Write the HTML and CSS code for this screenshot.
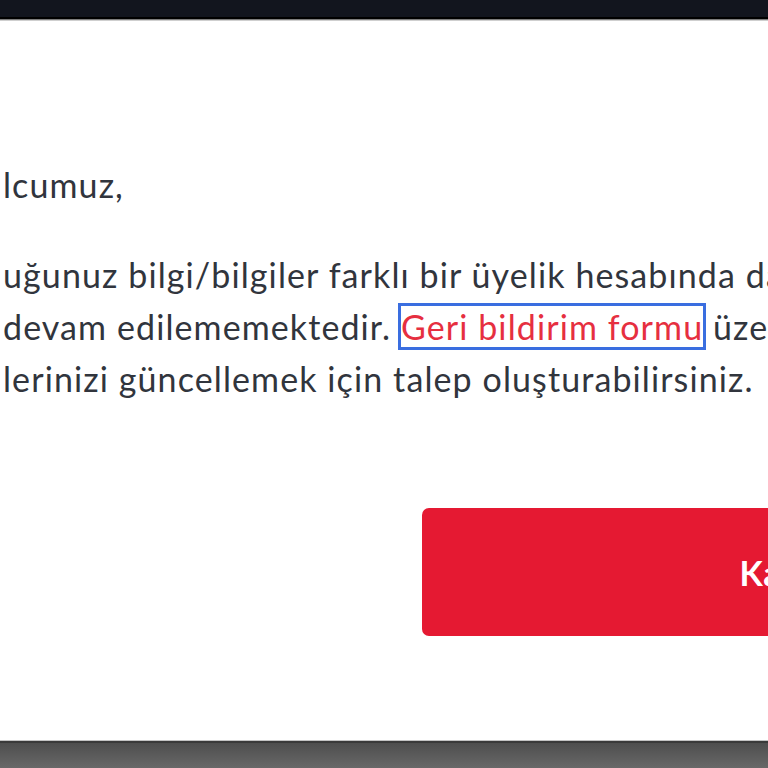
FILE: index.html
```html
<!DOCTYPE html>
<html lang="tr">
<head>
<meta charset="utf-8">
<title>Bilgilendirme</title>
<link rel="stylesheet" href="styles.css">
</head>
<body>
<div class="screen">
  <div class="topbar"></div>
  <main class="modal">
    <div class="modal-body">
      <p class="greeting">lcumuz,</p>
      <p class="message">uğunuz bilgi/bilgiler farklı bir üyelik hesabında da<br>devam edilememektedir. <a class="feedback-link" href="#">Geri bildirim formu</a> üzerinden<br>lerinizi güncellemek için talep oluşturabilirsiniz.</p>
    </div>
    <div class="modal-actions">
      <button class="btn-primary" type="button">Kapat</button>
    </div>
  </main>
  <div class="bottombar"></div>
</div>
</body>
</html>
```
FILE: styles.css
```css
html, body {
  margin: 0;
  padding: 0;
  height: 100%;
}
body {
  font-family: Lato, "Open Sans", sans-serif;
  background: #ffffff;
  overflow: hidden;
}
.screen {
  height: 768px;
  display: flex;
  flex-direction: column;
}
.topbar {
  height: 21px;
  flex-shrink: 0;
  background: linear-gradient(to bottom, #12151e 0, #12151e 17px, #000000 17px, #000000 19px, #7d7d7d 19px, #7d7d7d 20px, #cfcfcf 20px, #cfcfcf 21px);
}
.modal {
  flex: 1;
  background: #ffffff;
  overflow: hidden;
  display: flex;
  flex-direction: column;
}
.modal-body {
  padding: 138px 0 0 3px;
}
.greeting,
.message {
  margin: 0;
  font-size: 34px;
  line-height: 52px;
  color: #31353d;
  white-space: nowrap;
  letter-spacing: 1.1px;
}
.greeting {
  margin-bottom: 38px;
}
.feedback-link {
  color: #e62f40;
  text-decoration: none;
  outline: 3px solid #3a6ee0;
  outline-offset: 0;
}
.modal-actions {
  display: flex;
  padding-left: 422px;
  margin-top: 103px;
}
.btn-primary {
  flex-shrink: 0;
  width: 727px;
  height: 128px;
  border: none;
  border-radius: 7px;
  background: #e51932;
  color: #ffffff;
  font-family: Lato, "Open Sans", sans-serif;
  font-weight: 700;
  font-size: 34px;
  letter-spacing: 0.5px;
}
.bottombar {
  height: 28px;
  flex-shrink: 0;
  background: linear-gradient(to bottom, #c4c4c4 0, #c4c4c4 1px, #3a3a3a 1px, #3a3a3a 3px, #4e4e4e 3px, #686868 100%);
}
```
